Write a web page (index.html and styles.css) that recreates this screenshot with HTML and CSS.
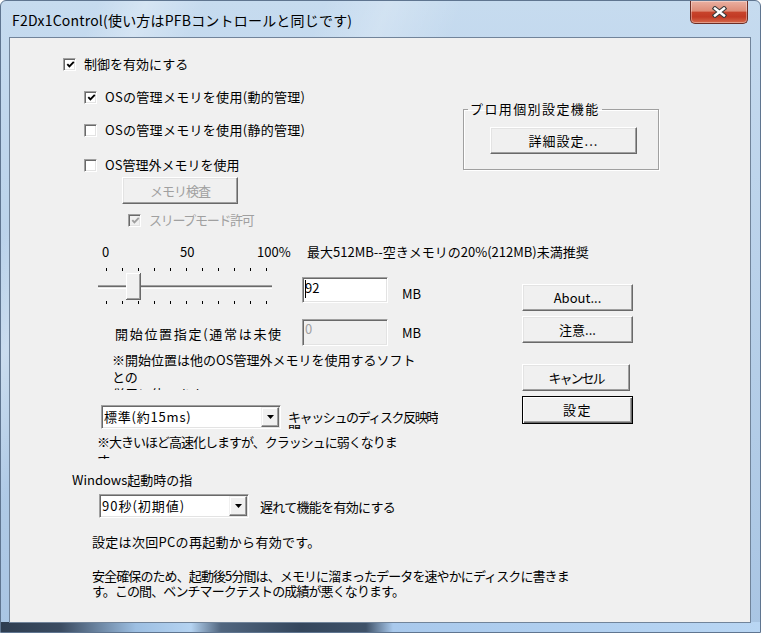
FILE: index.html
```html
<!DOCTYPE html>
<html lang="ja">

<head>
    <meta charset="UTF-8">
    <title>F2Dx1Control</title>
    <link rel="stylesheet" href="styles.css">
</head>

<body>
    <div class="window">
        <div class="titlebar">
            <span class="title">F2Dx1Control(使い方はPFBコントロールと同じです)</span>
            <a class="close" href="#">
                <svg width="15" height="12" viewBox="0 0 15 12">
                    <path d="M3 2.5 L12 9.5 M12 2.5 L3 9.5" stroke="#3a3a3a" stroke-width="4.6" stroke-linecap="square" />
                    <path d="M3 2.5 L12 9.5 M12 2.5 L3 9.5" stroke="#fff" stroke-width="2.4" stroke-linecap="square" />
                </svg>
            </a>
        </div>

        <div class="client">
            <div class="main">
                <div class="left">
                    <div class="check-row r1">
                        <span class="cb"><svg width="9" height="9" viewBox="0 0 9 9"><polyline points="1.3,4.2 3.4,6.4 7.8,1.8" fill="none" stroke="#000" stroke-width="1.9" /></svg></span>
                        <span>制御を有効にする</span>
                    </div>
                    <div class="check-row r2">
                        <span class="cb"><svg width="9" height="9" viewBox="0 0 9 9"><polyline points="1.3,4.2 3.4,6.4 7.8,1.8" fill="none" stroke="#000" stroke-width="1.9" /></svg></span>
                        <span class="os-label">OSの管理メモリを使用(動的管理)</span>
                    </div>
                    <div class="check-row r3">
                        <span class="cb"></span>
                        <span class="os-label">OSの管理メモリを使用(静的管理)</span>
                    </div>
                    <div class="check-row r4">
                        <span class="cb"></span>
                        <span>OS管理外メモリを使用</span>
                    </div>
                    <button class="btn btn-memcheck" disabled>メモリ検査</button>
                    <div class="check-row r-sleep off">
                        <span class="cb"><svg width="9" height="9" viewBox="0 0 9 9"><polyline points="1.3,4.2 3.4,6.4 7.8,1.8" fill="none" stroke="#a0a0a0" stroke-width="1.9" /></svg></span>
                        <span class="sleep-label">スリープモード許可</span>
                    </div>

                    <div class="scale">
                        <span class="s0">0</span>
                        <span class="s50">50</span>
                        <span class="s100">100%</span>
                        <span class="max-label">最大512MB--空きメモリの20%(212MB)未満推奨</span>
                    </div>

                    <div class="mem">
                        <svg class="slider" width="174" height="40" viewBox="0 0 174 40">
                            <g fill="#000">
                                <rect x="8" y="2" width="1" height="3" /><rect x="24" y="2" width="1" height="3" />
                                <rect x="40" y="2" width="1" height="3" /><rect x="56" y="2" width="1" height="3" />
                                <rect x="72" y="2" width="1" height="3" /><rect x="88" y="2" width="1" height="3" />
                                <rect x="104" y="2" width="1" height="3" /><rect x="120" y="2" width="1" height="3" />
                                <rect x="136" y="2" width="1" height="3" /><rect x="152" y="2" width="1" height="3" />
                                <rect x="168" y="2" width="1" height="3" />
                                <rect x="8" y="35" width="1" height="3" /><rect x="24" y="35" width="1" height="3" />
                                <rect x="40" y="35" width="1" height="3" /><rect x="56" y="35" width="1" height="3" />
                                <rect x="72" y="35" width="1" height="3" /><rect x="88" y="35" width="1" height="3" />
                                <rect x="104" y="35" width="1" height="3" /><rect x="120" y="35" width="1" height="3" />
                                <rect x="136" y="35" width="1" height="3" /><rect x="152" y="35" width="1" height="3" />
                                <rect x="168" y="35" width="1" height="3" />
                            </g>
                            <rect x="0" y="19" width="174" height="1" fill="#a0a0a0" />
                            <rect x="0" y="20" width="174" height="1" fill="#696969" />
                            <rect x="0" y="21" width="174" height="1" fill="#e3e3e3" />
                            <rect x="0" y="22" width="174" height="1" fill="#fff" />
                            <rect x="28" y="7" width="15" height="27" fill="#696969" />
                            <rect x="28" y="7" width="14" height="26" fill="#fff" />
                            <rect x="29" y="8" width="13" height="25" fill="#a0a0a0" />
                            <rect x="29" y="8" width="12" height="24" fill="#f0f0f0" />
                        </svg>
                        <div class="edit">92<span class="caret"></span></div>
                        <span class="unit">MB</span>

                        <span class="start-label">開始位置指定(通常は未使</span>
                        <div class="edit edit-off">0</div>
                        <span class="unit unit2">MB</span>
                    </div>

                    <p class="note">※開始位置は他のOS管理外メモリを使用するソフト<br>との<br>併用に使います</p>

                    <div class="cache">
                        <div class="combo">
                            <span class="combo-text cache-text">標準(約15ms)</span>
                            <span class="combo-btn"><svg width="7" height="4" viewBox="0 0 7 4"><polygon points="0,0 7,0 3.5,4" fill="#000" /></svg></span>
                        </div>
                        <p class="cache-label">キャッシュのディスク反映時<br>間</p>
                    </div>

                    <p class="warn">※大きいほど高速化しますが、クラッシュに弱くなりま<br>す</p>
                </div>

                <div class="right">
                    <fieldset class="pro">
                        <legend>プロ用個別設定機能</legend>
                        <button class="btn btn-detail">詳細設定...</button>
                    </fieldset>
                    <button class="btn btn-side btn-about">About...</button>
                    <button class="btn btn-side btn-caution">注意...</button>
                    <button class="btn btn-side btn-cancel">キャンセル</button>
                    <button class="btn btn-side btn-ok">設定</button>
                </div>
            </div>

            <p class="boot-label">Windows起動時の指</p>
            <div class="delay">
                <div class="combo combo-short">
                    <span class="combo-text delay-text">90秒(初期値)</span>
                    <span class="combo-btn"><svg width="7" height="4" viewBox="0 0 7 4"><polygon points="0,0 7,0 3.5,4" fill="#000" /></svg></span>
                </div>
                <p class="delay-label">遅れて機能を有効にする</p>
            </div>
            <p class="restart">設定は次回PCの再起動から有効です。</p>
            <p class="safety">安全確保のため、起動後5分間は、メモリに溜まったデータを速やかにディスクに書きま<br>す。この間、ベンチマークテストの成績が悪くなります。</p>
        </div>
    </div>
</body>

</html>
```

FILE: styles.css
```css
* {
    margin: 0;
    padding: 0;
}

html {
    background: #fff;
}

body {
    font-family: "Noto Sans CJK JP", "Liberation Sans", sans-serif;
    font-size: 13px;
    line-height: 14px;
    color: #000;
}

/* window frame */

.window {
    box-sizing: border-box;
    width: 761px;
    height: 633px;
    border: 1px solid #5f7590;
    border-radius: 6px 6px 0 0;
    padding: 0 9px 9px 8px;
    display: flex;
    flex-direction: column;
    background:
        linear-gradient(90deg, #2e3d50 0, #3b4c62 60px, #9dbfe2 135px, #b5d3f1 190px, #51667f 220px, #34465c 300px, #3f5269 365px, #a9c9ec 392px, #b9d6f3 761px) left bottom / 100% 10px no-repeat,
        linear-gradient(112deg, rgba(255, 255, 255, 0) 0, rgba(255, 255, 255, 0) 90px, rgba(255, 255, 255, .28) 135px, rgba(255, 255, 255, 0) 190px, rgba(255, 255, 255, 0) 300px, rgba(255, 255, 255, .22) 360px, rgba(255, 255, 255, 0) 430px),
        linear-gradient(#c6dbef, #a9c5e3);
}

.titlebar {
    height: 36px;
    display: flex;
    align-items: flex-start;
    flex: none;
}

.title {
    font-size: 14px;
    line-height: 20px;
    padding: 9px 0 0 3px;
    white-space: nowrap;
    letter-spacing: 0.2px;
}

.close {
    margin: 0 3px 0 auto;
    width: 58px;
    height: 23px;
    box-sizing: border-box;
    border: 1px solid #6b2e26;
    border-top: none;
    border-radius: 0 0 5px 5px;
    background: linear-gradient(#eab0a2 0, #de8c77 45%, #c7432b 52%, #c23a24 72%, #d66a4c 100%);
    box-shadow: inset 0 0 0 1px rgba(255, 255, 255, .35);
    display: flex;
    align-items: center;
    justify-content: center;
}

.client {
    flex: 1;
    border: 1px solid #71849a;
    background: #f0f0f0;
}

.main {
    display: flex;
}

.left {
    width: 453px;
    flex: none;
    white-space: nowrap;
}

.right {
    width: 196px;
    margin-top: 64px;
}

/* checkboxes */

.check-row {
    display: flex;
    align-items: center;
    height: 14px;
}

.cb {
    box-sizing: border-box;
    width: 13px;
    height: 13px;
    margin-right: 8px;
    border: 1px solid;
    border-color: #a0a0a0 #fff #fff #a0a0a0;
    box-shadow: inset 1px 1px 0 #696969, inset -1px -1px 0 #e3e3e3;
    background: #fff;
    display: flex;
    align-items: center;
    justify-content: center;
    flex: none;
}

.cb svg {
    margin: 1px 0 0 1px;
}

.off {
    color: #a0a0a0;
}

.off .cb {
    background: #f0f0f0;
}

.r1 {
    margin: 19px 0 0 53px;
}

.r2,
.r3 {
    margin: 19px 0 0 74px;
}

.r4 {
    margin: 21px 0 0 74px;
}

.os-label {
    letter-spacing: 0.3px;
}

.r-sleep {
    margin: 9px 0 0 118px;
}

.sleep-label {
    letter-spacing: -1.3px;
}

/* buttons */

.btn {
    box-sizing: border-box;
    display: flex;
    align-items: center;
    justify-content: center;
    font: inherit;
    color: #000;
    background: #f0f0f0;
    border: 1px solid;
    border-color: #fff #696969 #696969 #fff;
    box-shadow: inset -1px -1px 0 #a0a0a0, inset 1px 1px 0 #e3e3e3;
    height: 27px;
    white-space: nowrap;
}

.btn:disabled {
    color: #a0a0a0;
}

.btn-memcheck {
    margin: 5px 0 0 112px;
    width: 116px;
    letter-spacing: -1px;
}

.btn-detail {
    margin: 11px 0 0 26px;
    width: 147px;
    letter-spacing: 1px;
}

.btn-side {
    margin: 5px 0 0 59px;
    width: 111px;
}

.btn-about {
    margin-top: 114px;
}

.btn-cancel {
    margin-top: 21px;
    width: 108px;
    letter-spacing: -2px;
}

.btn-ok {
    height: 28px;
    letter-spacing: 1.5px;
    border-color: #000;
    box-shadow: inset 1px 1px 0 #fff, inset -1px -1px 0 #696969, inset -2px -2px 0 #a0a0a0;
}

/* group box */

.pro {
    box-sizing: border-box;
    width: 196px;
    border: 1px solid #a0a0a0;
    padding: 0 0 15px 0;
    box-shadow: inset 1px 1px 0 #fff, 1px 1px 0 #fff;
}

.pro legend {
    margin-left: 4px;
    padding: 0 2px;
    line-height: 14px;
    letter-spacing: 1.4px;
}

/* slider + memory size */

.scale {
    display: flex;
    margin: 18px 0 0 92px;
}

.scale span {
    flex: none;
}

.s0 {
    width: 78px;
}

.s50 {
    width: 77px;
}

.s100 {
    width: 50px;
}

.mem {
    display: grid;
    grid-template-columns: 292px 86px auto;
    align-items: start;
    margin-top: 7px;
}

.slider {
    display: block;
    margin-left: 88px;
}

.edit {
    position: relative;
    box-sizing: border-box;
    width: 86px;
    height: 26px;
    margin-top: 11px;
    padding: 3px 0 0 2px;
    background: #fff;
    border: 1px solid;
    border-color: #a0a0a0 #fff #fff #a0a0a0;
    box-shadow: inset 1px 1px 0 #696969, inset -1px -1px 0 #e3e3e3;
}

.caret {
    position: absolute;
    left: 2px;
    top: 2px;
    width: 1px;
    height: 18px;
    background: #000;
}

.edit-off {
    height: 27px;
    margin-top: 13px;
    padding-top: 2px;
    background: #f0f0f0;
    color: #a0a0a0;
}

.unit {
    margin: 21px 0 0 14px;
}

.unit2 {
    margin-top: 20px;
}

.start-label {
    margin: 21px 0 0 105px;
    letter-spacing: 1.7px;
}

.note {
    margin: 5px 0 0 102px;
    height: 39px;
    line-height: 17px;
    overflow: hidden;
}

/* combo boxes */

.cache,
.delay {
    display: flex;
    align-items: flex-start;
}

.cache {
    margin: 15px 0 0 91px;
}

.combo {
    box-sizing: border-box;
    display: flex;
    width: 180px;
    height: 24px;
    padding: 1px;
    background: #fff;
    border: 1px solid;
    border-color: #a0a0a0 #fff #fff #a0a0a0;
    box-shadow: inset 1px 1px 0 #696969, inset -1px -1px 0 #e3e3e3;
    flex: none;
}

.combo-short {
    width: 150px;
}

.combo-text {
    flex: 1;
    line-height: 20px;
    padding-left: 1px;
    white-space: nowrap;
}

.cache-text {
    letter-spacing: 0.8px;
}

.delay-text {
    letter-spacing: 1px;
}

.combo-btn {
    box-sizing: border-box;
    width: 18px;
    height: 20px;
    background: #f0f0f0;
    border: 1px solid;
    border-color: #f0f0f0 #696969 #696969 #f0f0f0;
    box-shadow: inset -1px -1px 0 #a0a0a0, inset 1px 1px 0 #fff;
    display: flex;
    align-items: center;
    justify-content: center;
}

.cache-label {
    margin: 5px 0 0 7px;
    height: 19px;
    line-height: 13px;
    overflow: hidden;
    letter-spacing: -1.4px;
}

.warn {
    margin: 4px 0 0 87px;
    height: 26px;
    line-height: 18px;
    overflow: hidden;
    letter-spacing: -1px;
}

/* bottom part */

.boot-label {
    margin: 14px 0 0 62px;
}

.delay {
    margin: 7px 0 0 89px;
}

.delay-label {
    margin: 6px 0 0 11px;
    letter-spacing: -0.7px;
    white-space: nowrap;
}

.restart {
    margin: 17px 0 0 82px;
    letter-spacing: 0.3px;
}

.safety {
    margin: 19px 0 0 82px;
    line-height: 15px;
    letter-spacing: -0.9px;
    white-space: nowrap;
}
```
